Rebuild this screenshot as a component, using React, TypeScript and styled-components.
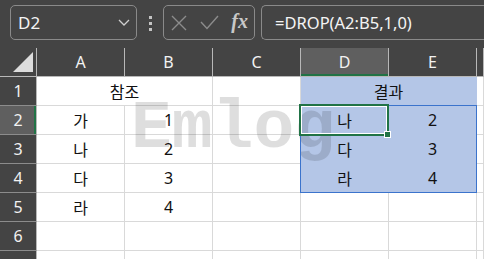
import React from 'react'
import styled, { createGlobalStyle } from 'styled-components'

const GlobalStyle = createGlobalStyle`
  html, body {
    margin: 0;
    padding: 0;
    background: #444444;
  }
`

const Page = styled.div`
  width: 484px;
  height: 259px;
  overflow: hidden;
  background: #444444;
  font-family: 'Noto Sans', 'Noto Sans CJK KR', sans-serif;
`

const TopBar = styled.div`
  height: 48px;
  display: flex;
  align-items: flex-start;
  padding: 5px 0 0 10px;
  box-sizing: border-box;
`

const Box = styled.div`
  height: 35px;
  box-sizing: border-box;
  border: 1px solid #8a8a8a;
  border-radius: 5px;
  display: flex;
  align-items: center;
`

const NameBox = styled(Box)`
  width: 127px;
  padding: 0 6px 0 7px;
  justify-content: space-between;
`

const NameText = styled.span`
  color: #f4f4f4;
  font-size: 17px;
`

const Grip = styled.div`
  width: 26px;
  display: flex;
  flex-direction: column;
  align-items: center;
  gap: 3px;
  padding-top: 11px;
  span {
    width: 3px;
    height: 3px;
    background: #c4c4c4;
  }
`

const FxBox = styled(Box)`
  width: 92px;
  padding: 0 6px 0 7px;
  justify-content: space-between;
`

const Fx = styled.span`
  font-family: 'Liberation Serif', serif;
  font-style: italic;
  font-weight: bold;
  font-size: 20px;
  color: #c8c8c8;
  margin-top: -3px;
`

const FormulaBox = styled(Box)`
  flex: 1;
  margin-left: 6px;
  padding-left: 13px;
  border-right: none;
  border-radius: 5px 0 0 5px;
  color: #f4f4f4;
  font-size: 16.5px;
`

const Sheet = styled.div`
  position: relative;
  background: #ffffff;
`

const Grid = styled.div`
  display: grid;
  grid-template-columns: 37px repeat(5, 88px) 1fr;
  grid-template-rows: repeat(8, 29px);
`

const Overlay = styled(Grid)`
  position: absolute;
  inset: 0;
  pointer-events: none;
  z-index: 2;
`

const Head = styled.div<{ $active?: boolean }>`
  box-sizing: border-box;
  background: ${(p) => (p.$active ? '#5f5f5f' : '#444444')};
  color: #f2f2f2;
  font-size: 16px;
  display: flex;
  align-items: center;
  justify-content: center;
`

const Corner = styled(Head)`
  border-right: 1px solid #b8b8b8;
  border-bottom: 1px solid #b8b8b8;
  justify-content: flex-end;
  align-items: flex-end;
  padding: 0 3px 4px 0;
`

const ColHead = styled(Head)`
  border-right: 1px solid #b8b8b8;
  border-bottom: 1px solid #b8b8b8;
  box-shadow: ${(p) => (p.$active ? 'inset 0 -2px 0 #217346' : 'none')};
`

const RowHead = styled(Head)`
  border-right: 1px solid #b8b8b8;
  border-bottom: 1px solid #8c8c8c;
  box-shadow: ${(p) => (p.$active ? 'inset -2px 0 0 #217346' : 'none')};
`

const Cell = styled.div<{ $fill?: boolean; $span?: number }>`
  box-sizing: border-box;
  grid-column: span ${(p) => p.$span ?? 1};
  background: ${(p) => (p.$fill ? '#b4c6e7' : '#ffffff')};
  border-right: 1px solid ${(p) => (p.$fill ? '#b4c6e7' : '#d9d9d9')};
  border-bottom: 1px solid ${(p) => (p.$fill ? '#b4c6e7' : '#d9d9d9')};
  color: #111111;
  font-size: 16px;
  display: flex;
  align-items: center;
  justify-content: center;
`

const SpillFrame = styled.div`
  grid-column: 5 / 7;
  grid-row: 3 / 6;
  margin: -1px 0 0 -1px;
  border: 1px solid #3b73cc;
`

const ActiveFrame = styled.div`
  position: relative;
  grid-column: 5 / 6;
  grid-row: 3 / 4;
  margin: -2px 0 -1px -2px;
  border: 2px solid #217346;
  box-shadow: inset 0 0 0 1px #ffffff;
`

const FillHandle = styled.div`
  position: absolute;
  right: -4px;
  bottom: -4px;
  width: 5px;
  height: 5px;
  background: #217346;
  border: 1px solid #ffffff;
`

const Watermark = styled.div`
  position: absolute;
  left: 131px;
  top: 47px;
  font-family: 'Liberation Mono', monospace;
  font-weight: bold;
  font-size: 68px;
  line-height: 1;
  color: rgba(0, 0, 0, 0.13);
  filter: blur(0.5px);
  z-index: 1;
  pointer-events: none;
`

const cols = ['A', 'B', 'C', 'D', 'E', '']
const left = ['가', '나', '다', '라']
const right = [
  ['나', '2'],
  ['다', '3'],
  ['라', '4'],
]

export default function App() {
  return (
    <Page>
      <GlobalStyle />
      <TopBar>
        <NameBox>
          <NameText>D2</NameText>
          <svg width="12" height="7" viewBox="0 0 12 7">
            <path d="M1 1 L6 6 L11 1" fill="none" stroke="#cfcfcf" strokeWidth="1.3" />
          </svg>
        </NameBox>
        <Grip>
          <span />
          <span />
          <span />
        </Grip>
        <FxBox>
          <svg width="16" height="16" viewBox="0 0 16 16">
            <path d="M1 1 L15 15 M15 1 L1 15" stroke="#8c8c8c" strokeWidth="1.4" />
          </svg>
          <svg width="19" height="15" viewBox="0 0 19 15">
            <path d="M1 7 L7 13.5 L18 1" fill="none" stroke="#8c8c8c" strokeWidth="1.4" />
          </svg>
          <Fx>fx</Fx>
        </FxBox>
        <FormulaBox>=DROP(A2:B5,1,0)</FormulaBox>
      </TopBar>
      <Sheet>
        <Grid>
          <Corner>
            <svg width="20" height="20" viewBox="0 0 20 20">
              <polygon points="20,0 20,20 0,20" fill="#dcdcdc" />
            </svg>
          </Corner>
          {cols.map((c) => (
            <ColHead key={c || 'f'} $active={c === 'D'}>
              {c}
            </ColHead>
          ))}

          <RowHead>1</RowHead>
          <Cell $span={2}>참조</Cell>
          <Cell />
          <Cell $span={2} $fill>
            결과
          </Cell>
          <Cell />

          {left.map((k, i) => (
            <React.Fragment key={k}>
              <RowHead $active={i === 0}>{i + 2}</RowHead>
              <Cell>{k}</Cell>
              <Cell>{i + 1}</Cell>
              <Cell />
              <Cell $fill={i < 3}>{right[i]?.[0]}</Cell>
              <Cell $fill={i < 3}>{right[i]?.[1]}</Cell>
              <Cell />
            </React.Fragment>
          ))}

          {[6, 7].map((n) => (
            <React.Fragment key={n}>
              <RowHead>{n}</RowHead>
              <Cell />
              <Cell />
              <Cell />
              <Cell />
              <Cell />
              <Cell />
            </React.Fragment>
          ))}
        </Grid>
        <Watermark>Emlog</Watermark>
        <Overlay>
          <SpillFrame />
          <ActiveFrame>
            <FillHandle />
          </ActiveFrame>
        </Overlay>
      </Sheet>
    </Page>
  )
}
